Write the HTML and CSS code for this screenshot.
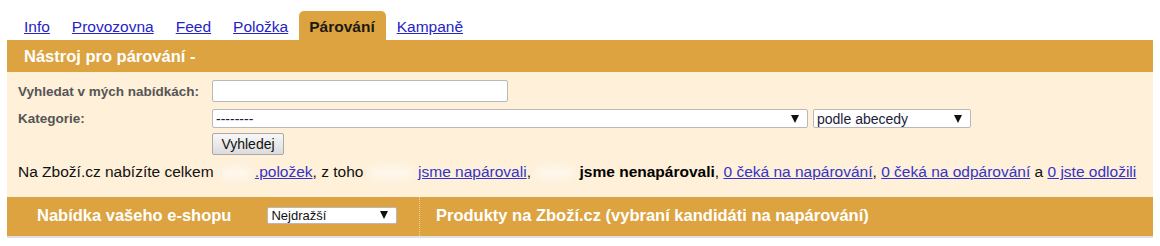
FILE: index.html
```html
<!DOCTYPE html>
<html lang="cs">
<head>
    <meta charset="UTF-8">
    <title>Párování</title>
    <link rel="stylesheet" href="styles.css">
</head>
<body>
    <div class="page">
        <ul class="tabs">
            <li><a href="#">Info</a></li>
            <li><a href="#">Provozovna</a></li>
            <li><a href="#">Feed</a></li>
            <li><a href="#">Položka</a></li>
            <li class="active"><span>Párování</span></li>
            <li><a href="#">Kampaně</a></li>
        </ul>

        <div class="tool">
            <h2 class="tool-title">Nástroj pro párování -</h2>
            <div class="tool-body">
                <form class="search">
                    <label for="query">Vyhledat v mých nabídkách:</label>
                    <input id="query" type="text">

                    <label for="category">Kategorie:</label>
                    <div class="select-row">
                        <span class="select select-wide">
                            <select id="category"><option>--------</option></select>
                        </span>
                        <span class="select select-sort">
                            <select><option>podle abecedy</option></select>
                        </span>
                    </div>

                    <span></span>
                    <div><button type="button">Vyhledej</button></div>
                </form>

                <p class="summary">
                    Na Zboží.cz nabízíte celkem <span class="blur b1"></span><a href="#">.položek</a>, z toho <span class="blur b2"></span> <a href="#">jsme napárovali</a>, <span class="blur b3"></span> <b>jsme nenapárovali</b>, <a href="#">0 čeká na napárování</a>, <a href="#">0 čeká na odpárování</a> a <a href="#">0 jste odložili</a>
                </p>
            </div>
        </div>

        <div class="columns">
            <div class="col col-shop">
                <h3>Nabídka vašeho e-shopu</h3>
                <span class="select select-small">
                    <select><option>Nejdražší</option></select>
                </span>
            </div>
            <div class="col col-products">
                <h3>Produkty na Zboží.cz (vybraní kandidáti na napárování)</h3>
            </div>
        </div>
    </div>
</body>
</html>
```

FILE: styles.css
```css
body {
    margin: 0;
    padding: 0;
    background: #fff;
    font-family: "Liberation Sans", Arial, sans-serif;
    color: #111;
}
.page {
    width: 1146px;
    margin-left: 7px;
}

/* tabs */
.tabs {
    list-style: none;
    display: flex;
    margin: 11px 0 0 6px;
    padding: 0;
    height: 29px;
}
.tabs li {
    padding: 0 11px;
    line-height: 31px;
    font-size: 15.5px;
}
.tabs a {
    color: #2424c4;
}
.tabs li.active {
    background: #dca340;
    border-radius: 5px 5px 0 0;
    font-weight: bold;
    color: #1c1a10;
    padding: 0 11px 0 10px;
}

/* tool panel */
.tool-title {
    margin: 0;
    height: 32px;
    line-height: 32px;
    padding-left: 17px;
    background: #dca340;
    color: #fff;
    font-size: 16.5px;
}
.tool-body {
    background: #fef0d9;
    padding: 8px 0 16px 11px;
}
.search {
    display: grid;
    grid-template-columns: 194px auto;
    align-items: center;
    row-gap: 7px;
}
.search label {
    font-size: 13.5px;
    font-weight: bold;
    color: #555;
}
.search input {
    width: 296px;
    height: 22px;
    box-sizing: border-box;
    border: 1px solid #b9b9b9;
    border-radius: 2px;
    background: #fff;
    margin: 0;
}
.select-row {
    display: flex;
    gap: 5px;
}
.search button {
    width: 72px;
    height: 22px;
    margin-top: -3px;
    font-family: "Liberation Sans", Arial, sans-serif;
    font-size: 14px;
    color: #111;
    border: 1px solid #a9a9a9;
    border-radius: 2px;
    background: linear-gradient(#f8f8f8, #dcdcdc);
    padding: 0;
}

.select {
    position: relative;
    display: inline-block;
}
.select select {
    appearance: none;
    -webkit-appearance: none;
    width: 100%;
    box-sizing: border-box;
    border: 1px solid #b9b9b9;
    border-radius: 2px;
    background: #fff;
    font-family: "Liberation Sans", Arial, sans-serif;
    font-size: 14px;
    color: #1c1c3a;
    padding: 0 0 0 3px;
    margin: 0;
    height: 100%;
    display: block;
}
.select::after {
    content: "";
    position: absolute;
    right: 9px;
    top: 50%;
    margin-top: -4px;
    border-left: 4px solid transparent;
    border-right: 4px solid transparent;
    border-top: 8px solid #111;
    pointer-events: none;
}
.select-wide {
    width: 596px;
    height: 19px;
}
.select-sort {
    width: 158px;
    height: 19px;
}
.select-small {
    width: 130px;
    height: 17px;
}
.select-small select {
    font-size: 13px;
    color: #111;
}

.summary {
    margin: 8px 0 0 0;
    font-size: 15.5px;
    line-height: 18px;
    color: #111;
    white-space: nowrap;
}
.summary a {
    color: #3434c6;
}
.summary b {
    color: #000;
}
.blur {
    display: inline-block;
    height: 12px;
    vertical-align: middle;
    background: rgba(255, 255, 255, 0.55);
    filter: blur(4px);
    border-radius: 6px;
}
.b1 {
    width: 32px;
    margin-left: 2px;
    margin-right: 3px;
}
.b2 {
    width: 46px;
}
.b3 {
    width: 40px;
}

/* lower header */
.columns {
    display: flex;
    height: 39px;
    background: #dca340;
    border-bottom: 2px solid #e0e0e0;
}
.col {
    display: flex;
    align-items: center;
    padding-bottom: 3px;
    box-sizing: border-box;
}
.col h3 {
    margin: 0;
    color: #fff;
    font-size: 16.5px;
}
.col-shop {
    width: 413px;
    padding-left: 30px;
    gap: 36px;
    border-right: 1px dotted #f3d38e;
}
.col-products {
    padding-left: 16px;
}
```
